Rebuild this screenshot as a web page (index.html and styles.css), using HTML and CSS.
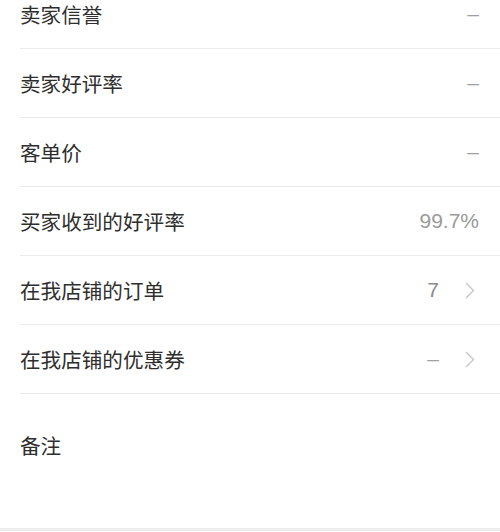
FILE: index.html
```html
<!DOCTYPE html>
<html lang="zh-CN">
<head>
<meta charset="utf-8">
<link rel="stylesheet" href="styles.css">
</head>
<body>
<div class="list">
  <div class="row"><span class="label">卖家信誉</span><span class="value dash">–</span></div>
  <div class="row"><span class="label">卖家好评率</span><span class="value dash">–</span></div>
  <div class="row"><span class="label">客单价</span><span class="value dash">–</span></div>
  <div class="row"><span class="label">买家收到的好评率</span><span class="value">99.7%</span></div>
  <div class="row link"><span class="label">在我店铺的订单</span><span class="value num">7</span>
    <svg class="chev" width="10" height="17" viewBox="0 0 10 17"><path d="M1 1 L8.5 8.5 L1 16" fill="none" stroke="#c4c4c4" stroke-width="1.3"/></svg></div>
  <div class="row link"><span class="label">在我店铺的优惠券</span><span class="value dash">–</span>
    <svg class="chev" width="10" height="17" viewBox="0 0 10 17"><path d="M1 1 L8.5 8.5 L1 16" fill="none" stroke="#c4c4c4" stroke-width="1.3"/></svg></div>
  <div class="remark"><span class="label">备注</span></div>
</div>
<div class="band"></div>
</body>
</html>
```
FILE: styles.css
```css
html, body {
  margin: 0;
  padding: 0;
  background: #ffffff;
  overflow: hidden;
}
body {
  font-family: "Noto Sans CJK SC", "Noto Sans", sans-serif;
  color: #333333;
}
.list {
  margin-top: -20px;
  padding-left: 20px;
}
.row {
  display: flex;
  align-items: center;
  height: 68px;
  border-bottom: 1px solid #ececec;
  padding-right: 21px;
}
.row.link {
  padding-right: 25px;
}
.label {
  flex: 1;
  font-size: 20.6px;
  line-height: 28px;
  color: #2e2e2e;
}
.value {
  font-family: "Liberation Sans", "Noto Sans", sans-serif;
  font-size: 21px;
  color: #9a9a9a;
}
.value.num {
  color: #8a8a8a;
}
.value.dash {
  color: #a0a0a0;
}
.chev {
  margin-left: 26px;
  display: block;
}
.remark {
  height: 134px;
  padding-top: 37px;
  box-sizing: border-box;
}
.band {
  height: 3px;
  background: #ededed;
}
```
